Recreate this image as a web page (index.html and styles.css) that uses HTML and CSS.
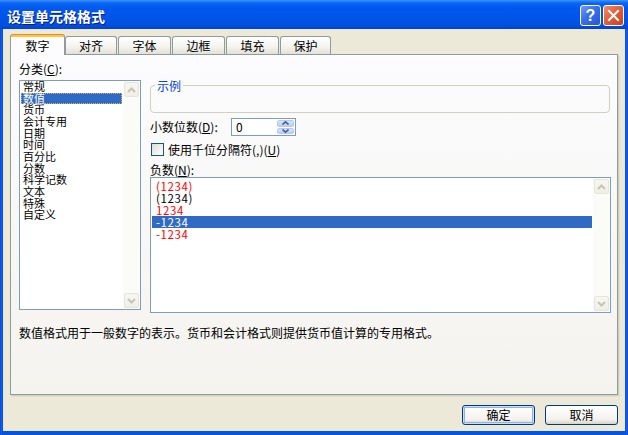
FILE: index.html
```html
<!DOCTYPE html>
<html lang="zh-CN">
<head>
<meta charset="utf-8">
<title>设置单元格格式</title>
<link rel="stylesheet" href="styles.css">
</head>
<body>
<div class="window">
  <div class="titlebar">
    <span class="title">设置单元格格式</span>
    <div class="caption-buttons">
      <span class="cbtn help">?</span>
      <span class="cbtn close"><svg width="13" height="13" viewBox="0 0 13 13"><path d="M2 2 L11 11 M11 2 L2 11" stroke="#fff" stroke-width="2" stroke-linecap="square"/></svg></span>
    </div>
  </div>
  <div class="client">
    <div class="tabs">
      <div class="tab active">数字</div>
      <div class="tab">对齐</div>
      <div class="tab w53">字体</div>
      <div class="tab w53">边框</div>
      <div class="tab w53">填充</div>
      <div class="tab w51">保护</div>
    </div>
    <div class="panel">
      <div class="cols">
        <div class="left">
          <div class="label">分类(<u>C</u>):</div>
          <div class="listbox cat">
            <div class="items">
              <div class="item">常规</div>
              <div class="item sel">数值</div>
              <div class="item">货币</div>
              <div class="item">会计专用</div>
              <div class="item">日期</div>
              <div class="item">时间</div>
              <div class="item">百分比</div>
              <div class="item">分数</div>
              <div class="item">科学记数</div>
              <div class="item">文本</div>
              <div class="item">特殊</div>
              <div class="item">自定义</div>
            </div>
            <div class="vscroll">
              <span class="sbtn"><svg width="9" height="6" viewBox="0 0 9 6"><polyline points="1,5 4.5,1.5 8,5" fill="none" stroke="#C6C4B6" stroke-width="2"/></svg></span>
              <span class="strack"></span>
              <span class="sbtn"><svg width="9" height="6" viewBox="0 0 9 6"><polyline points="1,1 4.5,4.5 8,1" fill="none" stroke="#C6C4B6" stroke-width="2"/></svg></span>
            </div>
          </div>
        </div>
        <div class="right">
          <fieldset class="sample"><legend>示例</legend></fieldset>
          <div class="num-row">
            <span class="num-label">小数位数(<u>D</u>):</span>
            <div class="spin">
              <span class="spin-val">0</span>
              <span class="spin-btns">
                <span class="spart"><svg width="7" height="4" viewBox="0 0 7 4"><polyline points="0.5,3.5 3.5,0.8 6.5,3.5" fill="none" stroke="#4D6185" stroke-width="1.6"/></svg></span>
                <span class="spart"><svg width="7" height="4" viewBox="0 0 7 4"><polyline points="0.5,0.5 3.5,3.2 6.5,0.5" fill="none" stroke="#4D6185" stroke-width="1.6"/></svg></span>
              </span>
            </div>
          </div>
          <div class="check-row"><span class="checkbox"></span><span>使用千位分隔符(,)(<u>U</u>)</span></div>
          <div class="label neg-label">负数(<u>N</u>):</div>
          <div class="listbox neg">
            <div class="items">
              <div class="row red">(1234)</div>
              <div class="row">(1234)</div>
              <div class="row red">1234</div>
              <div class="row sel">-1234</div>
              <div class="row red">-1234</div>
            </div>
            <div class="vscroll">
              <span class="sbtn"><svg width="9" height="6" viewBox="0 0 9 6"><polyline points="1,5 4.5,1.5 8,5" fill="none" stroke="#C6C4B6" stroke-width="2"/></svg></span>
              <span class="strack"></span>
              <span class="sbtn"><svg width="9" height="6" viewBox="0 0 9 6"><polyline points="1,1 4.5,4.5 8,1" fill="none" stroke="#C6C4B6" stroke-width="2"/></svg></span>
            </div>
          </div>
        </div>
      </div>
      <div class="desc">数值格式用于一般数字的表示。货币和会计格式则提供货币值计算的专用格式。</div>
    </div>
    <div class="footer">
      <span class="btn default">确定</span>
      <span class="btn">取消</span>
    </div>
  </div>
</div>
</body>
</html>
```
FILE: styles.css
```css
* { box-sizing: border-box; }
html, body { margin: 0; padding: 0; }
body {
  width: 628px;
  height: 435px;
  overflow: hidden;
  background: #0A4BDD;
  font-family: "Noto Sans CJK SC", "Liberation Sans", sans-serif;
  font-size: 12px;
  color: #000;
}
u { text-decoration: underline; }

.window {
  width: 628px;
  height: 435px;
  display: flex;
  flex-direction: column;
  background: linear-gradient(90deg, #0831D9 0, #166AEE 1px, #0855DD 2px, #0855DD calc(100% - 2px), #166AEE calc(100% - 1px), #0831D9 100%);
}

.titlebar {
  height: 29px;
  flex: none;
  display: flex;
  align-items: center;
  justify-content: space-between;
  padding: 0 4px 0 7px;
  background: linear-gradient(#3D93FF 0, #0A66F4 3px, #0058EE 8px, #0055E8 55%, #0050E0 85%, #0044D0 100%);
}
.title {
  margin-top: 3px;
  color: #fff;
  font-weight: bold;
  font-size: 14px;
  line-height: 16px;
  text-shadow: 1px 1px 0 #0A1E80;
}
.caption-buttons { display: flex; gap: 2px; margin-top: 2px; }
.cbtn {
  width: 21px;
  height: 21px;
  border: 1px solid #fff;
  border-radius: 3px;
  display: flex;
  align-items: center;
  justify-content: center;
}
.help {
  background: linear-gradient(135deg, #6E9CF6 0%, #3A6FE4 45%, #2556D4 100%);
  color: #fff;
  font: bold 16px/1 "Liberation Sans", sans-serif;
}
.close {
  background: linear-gradient(135deg, #F08E6C 0%, #E2613D 45%, #C9401C 100%);
}

.client {
  flex: 1;
  margin: 0 3px 4px 3px;
  background: #ECE9D8;
  padding: 5px 7px 0 7px;
  display: flex;
  flex-direction: column;
}

.tabs {
  display: flex;
  align-items: flex-end;
  height: 20px;
  flex: none;
}
.tab {
  width: 52px;
  height: 18px;
  margin-left: 1px;
  border: 1px solid #919B9C;
  border-bottom: none;
  border-radius: 3px 3px 0 0;
  background: linear-gradient(#FFFFFF, #F4F4F0 55%, #E3E1D6);
  display: flex;
  align-items: center;
  justify-content: center;
  line-height: 14px;
}
.tab.w53 { width: 53px; }
.tab.w51 { width: 51px; }
.tab.active {
  width: 55px;
  height: 21px;
  margin-left: 0;
  margin-bottom: -1px;
  border-top-color: #E68B2C;
  background: linear-gradient(#FFC73C 0, #FFC73C 2px, #FCFCFE 2px);
  padding-top: 2px;
  position: relative;
  z-index: 1;
}
.tab.active + .tab { margin-left: 0; }

.panel {
  height: 341px;
  flex: none;
  border: 1px solid #919B9C;
  background: linear-gradient(#FCFCFE, #F4F3EE);
  box-shadow: 1px 1px 0 #D0CEBF, 2px 2px 0 #E2DFD1;
  padding: 7px 6px 0 8px;
}

.cols {
  display: grid;
  grid-template-columns: 122px 461px;
  column-gap: 9px;
}
.label { line-height: 14px; height: 14px; }

.listbox {
  display: flex;
  border: 1px solid #7F9DB9;
  background: #fff;
}
.listbox .items { flex: 1; }
.cat { margin-top: 4px; height: 230px; }
.cat .items { padding: 0 1px; }
.item {
  height: 11.67px;
  line-height: 11.67px;
  font-size: 11px;
  padding-left: 2px;
  white-space: nowrap;
}
.item.sel {
  background: #316AC5;
  color: #fff;
  outline: 1px dotted #D9B36A;
  outline-offset: -1px;
}

.vscroll {
  width: 17px;
  flex: none;
  display: flex;
  flex-direction: column;
  background: #FBFBF7;
  padding: 1px;
}
.sbtn {
  height: 15px;
  flex: none;
  border: 1px solid #E6E5DC;
  border-radius: 2px;
  background: linear-gradient(#F7F6F2, #EFEEE7);
  display: flex;
  align-items: center;
  justify-content: center;
}
.strack { flex: 1; }

.right { padding-top: 18px; }
.sample {
  margin: 0 1px 0 0;
  padding: 0 4px;
  height: 33px;
  border: 1px solid #D0D0BF;
  border-radius: 4px;
}
.sample legend {
  padding: 0 2px;
  color: #0046D5;
  font-size: 12px;
  line-height: 11px;
}

.num-row {
  margin-top: 5px;
  height: 18px;
  display: flex;
  align-items: center;
}
.num-label { width: 81px; line-height: 14px; }
.spin {
  width: 65px;
  height: 18px;
  border: 1px solid #7F9DB9;
  background: #fff;
  display: flex;
  padding: 1px;
}
.spin-val { flex: 1; padding-left: 3px; line-height: 14px; }
.spin-btns {
  width: 17px;
  display: flex;
  flex-direction: column;
  gap: 1px;
}
.spart {
  flex: 1;
  border: 1px solid #B7C8F2;
  border-radius: 2px;
  background: linear-gradient(#D7E3FD, #B9CDF7);
  display: flex;
  align-items: center;
  justify-content: center;
}

.check-row {
  margin-top: 6px;
  margin-left: 1px;
  height: 15px;
  display: flex;
  align-items: center;
  gap: 4px;
  line-height: 14px;
}
.checkbox {
  width: 13px;
  height: 13px;
  border: 1px solid #1C5180;
  background: linear-gradient(135deg, #DCDCD7, #FFFFFF);
}

.neg-label { margin-top: 6px; }
.neg { height: 136px; }
.neg .items { padding: 2px 1px 0 1px; }
.row {
  height: 12px;
  line-height: 12px;
  font-size: 11.5px;
  padding-left: 4px;
  letter-spacing: 0.6px;
}
.row.red { color: #FF0000; }
.row.sel { background: #316AC5; color: #fff; }

.desc {
  margin-top: 13px;
  line-height: 14px;
}

.footer {
  margin-top: 10px;
  display: flex;
  justify-content: flex-end;
  gap: 10px;
}
.btn {
  width: 73px;
  height: 20px;
  border: 1px solid #003C74;
  border-radius: 3px;
  background: linear-gradient(#FFFFFF, #F3F2EE 75%, #D8D3C7);
  display: flex;
  align-items: center;
  justify-content: center;
  line-height: 14px;
}
.btn.default {
  box-shadow: inset 0 0 0 1px #CEDDFC, inset 0 0 0 2px #8FB0F2;
}
```
